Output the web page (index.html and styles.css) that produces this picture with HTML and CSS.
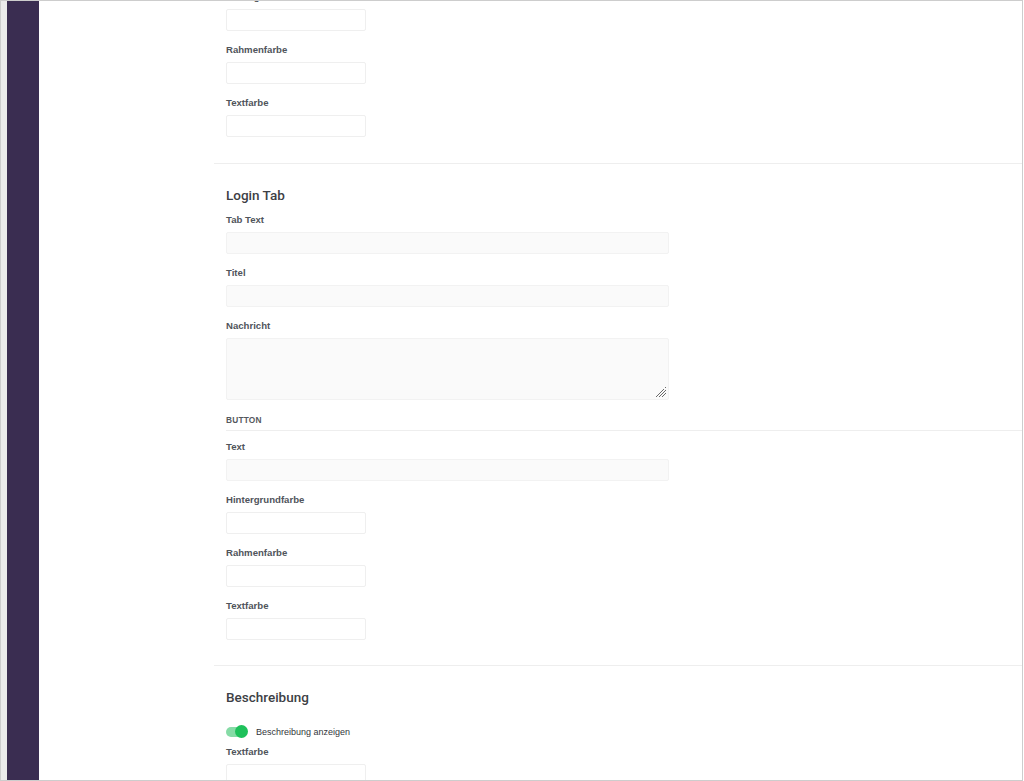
FILE: index.html
```html
<!DOCTYPE html>
<html lang="de">
<head>
    <meta charset="UTF-8">
    <meta name="viewport" content="width=device-width, initial-scale=1.0">
    <title>Einstellungen</title>
    <link rel="stylesheet" href="styles.css">
</head>
<body>
    <div class="frame">
        <div class="gutter"></div>
        <aside class="sidebar"></aside>

        <main class="main">
            <div class="scroll">
                <!-- Abschnitt oberhalb (angeschnitten) -->
                <section class="section section-cut">
                    <div class="field">
                        <label class="label">Hintergrundfarbe</label>
                        <input class="input input-small" type="text">
                    </div>
                    <div class="field">
                        <label class="label">Rahmenfarbe</label>
                        <input class="input input-small" type="text">
                    </div>
                    <div class="field">
                        <label class="label">Textfarbe</label>
                        <input class="input input-small" type="text">
                    </div>
                </section>

                <section class="section">
                    <h2 class="section-title">Login Tab</h2>
                    <div class="field">
                        <label class="label">Tab Text</label>
                        <input class="input input-wide" type="text">
                    </div>
                    <div class="field">
                        <label class="label">Titel</label>
                        <input class="input input-wide" type="text">
                    </div>
                    <div class="field">
                        <label class="label">Nachricht</label>
                        <textarea class="input input-wide textarea"></textarea>
                    </div>

                    <div class="subheader">Button</div>

                    <div class="field">
                        <label class="label">Text</label>
                        <input class="input input-wide" type="text">
                    </div>
                    <div class="field">
                        <label class="label">Hintergrundfarbe</label>
                        <input class="input input-small" type="text">
                    </div>
                    <div class="field">
                        <label class="label">Rahmenfarbe</label>
                        <input class="input input-small" type="text">
                    </div>
                    <div class="field">
                        <label class="label">Textfarbe</label>
                        <input class="input input-small" type="text">
                    </div>
                </section>

                <section class="section">
                    <h2 class="section-title">Beschreibung</h2>
                    <div class="toggle-row">
                        <span class="toggle on"><span class="knob"></span></span>
                        <span class="toggle-label">Beschreibung anzeigen</span>
                    </div>
                    <div class="field">
                        <label class="label">Textfarbe</label>
                        <input class="input input-small" type="text">
                    </div>
                </section>
            </div>
        </main>
    </div>
</body>
</html>
```

FILE: styles.css
```css
* {
    margin: 0;
    padding: 0;
    box-sizing: border-box;
}

html, body {
    height: 781px;
    overflow: hidden;
    background: #fff;
}

body {
    font-family: "Liberation Sans", Arial, sans-serif;
    color: #3c3f44;
}

.frame {
    display: flex;
    width: 1023px;
    height: 781px;
    border: 1px solid #cdcdcd;
    overflow: hidden;
}

.gutter {
    width: 6px;
    background: #ebebeb;
    flex-shrink: 0;
}

.sidebar {
    width: 32px;
    background: #3a2d51;
    flex-shrink: 0;
}

.main {
    flex: 1;
    background: #fff;
    overflow: hidden;
}

.scroll {
    margin-top: -12px;
}

.section {
    margin-left: 175px;
    padding: 22px 0 14px 12px;
    border-top: 1px solid #eeeeee;
}

.section-cut {
    padding-top: 0;
    padding-bottom: 15px;
    border-top: none;
}

.section-title {
    font-family: Roboto, "Liberation Sans", sans-serif;
    font-size: 13.5px;
    font-weight: 500;
    line-height: 18px;
    color: #3d4045;
    margin-bottom: 8px;
}

.field {
    margin-bottom: 11px;
}

.label {
    display: block;
    font-size: 9.6px;
    font-weight: bold;
    line-height: 14px;
    color: #50545b;
    padding-top: 1px;
    margin-bottom: 5px;
}

.input {
    display: block;
    height: 22px;
    border: 1px solid #efefef;
    border-radius: 2px;
    background: #fff;
    outline: none;
    font: inherit;
}

.input-small {
    width: 140px;
}

.input-wide {
    width: 443px;
    background-color: #fafafa;
    border-color: #f2f2f2;
}

/* Griff unten rechts selbst gezeichnet */
.textarea {
    height: 62px;
    resize: none;
    background-image:
        linear-gradient(135deg, #fafafa 50%, transparent 50%),
        repeating-linear-gradient(135deg, transparent 0 1.6px, #6a6a6a 1.6px 2.4px);
    background-size: 10px 10px, 10px 10px;
    background-position: right 2px bottom 2px, right 2px bottom 2px;
    background-repeat: no-repeat;
}

.subheader {
    font-size: 8.3px;
    font-weight: bold;
    letter-spacing: 0.2px;
    text-transform: uppercase;
    color: #55585d;
    line-height: 12px;
    padding-top: 3px;
    padding-bottom: 4px;
    border-bottom: 1px solid #eeeeee;
    margin-bottom: 8px;
}

.toggle-row {
    display: flex;
    align-items: center;
    gap: 9px;
    height: 14px;
    margin-top: 19px;
    margin-bottom: 5px;
}

.toggle {
    position: relative;
    width: 21px;
    height: 10px;
    border-radius: 5px;
    background: #86dba6;
}

.toggle .knob {
    position: absolute;
    top: -2px;
    right: -1px;
    width: 13px;
    height: 13px;
    border-radius: 50%;
    background: #1ec15b;
}

.toggle-label {
    font-size: 9px;
    color: #33363b;
}
```
